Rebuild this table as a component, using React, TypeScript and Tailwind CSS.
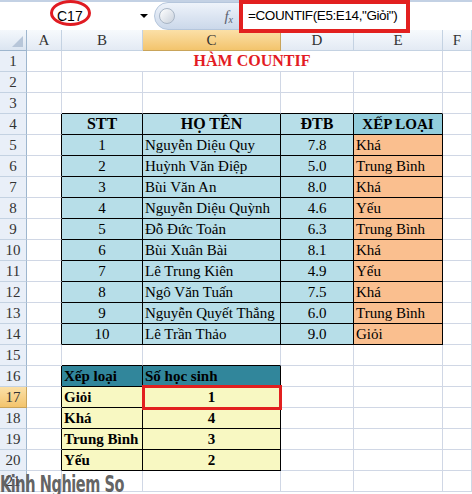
import React from 'react';

// ===========================================
// DATA
// ===========================================

const students = [
  { stt: 1, name: 'Nguyễn Diệu Quy', dtb: '7.8', rank: 'Khá' },
  { stt: 2, name: 'Huỳnh Văn Điệp', dtb: '5.0', rank: 'Trung Bình' },
  { stt: 3, name: 'Bùi Văn An', dtb: '8.0', rank: 'Khá' },
  { stt: 4, name: 'Nguyễn Diệu Quỳnh', dtb: '4.6', rank: 'Yếu' },
  { stt: 5, name: 'Đỗ Đức Toản', dtb: '6.3', rank: 'Trung Bình' },
  { stt: 6, name: 'Bùi Xuân Bài', dtb: '8.1', rank: 'Khá' },
  { stt: 7, name: 'Lê Trung Kiên', dtb: '4.9', rank: 'Yếu' },
  { stt: 8, name: 'Ngô Văn Tuấn', dtb: '7.5', rank: 'Khá' },
  { stt: 9, name: 'Nguyễn Quyết Thắng', dtb: '6.0', rank: 'Trung Bình' },
  { stt: 10, name: 'Lê Trần Thảo', dtb: '9.0', rank: 'Giỏi' },
];

const summary = [
  { label: 'Giỏi', count: 1 },
  { label: 'Khá', count: 4 },
  { label: 'Trung Bình', count: 3 },
  { label: 'Yếu', count: 2 },
];

type CellInfo = {
  text?: string;
  bg?: string;
  align?: 'left' | 'center';
  bold?: boolean;
  big?: boolean;
  selected?: boolean;
};

const inTable1 = (r: number, c: number) => r >= 4 && r <= 14 && c >= 1 && c <= 4;
const inTable2 = (r: number, c: number) => r >= 16 && r <= 20 && c >= 1 && c <= 2;
const inTable = (r: number, c: number) => inTable1(r, c) || inTable2(r, c);

function getCell(r: number, c: number): CellInfo {
  if (r === 4 && c >= 1 && c <= 4) {
    const heads = ['', 'STT', 'HỌ TÊN', 'ĐTB', 'XẾP LOẠI'];
    return {
      text: heads[c],
      bg: c === 4 ? 'bg-[#92cddc]' : 'bg-[#b7dee8]',
      align: 'center',
      bold: true,
      big: c !== 4,
    };
  }
  if (r >= 5 && r <= 14) {
    const s = students[r - 5];
    if (c === 1) return { text: String(s.stt), bg: 'bg-[#b7dee8]', align: 'center' };
    if (c === 2) return { text: s.name, bg: 'bg-[#b7dee8]', align: 'left' };
    if (c === 3) return { text: s.dtb, bg: 'bg-[#b7dee8]', align: 'center' };
    if (c === 4) return { text: s.rank, bg: 'bg-[#fabf8f]', align: 'left' };
  }
  if (r === 16) {
    if (c === 1) return { text: 'Xếp loại', bg: 'bg-[#31869b]', align: 'left', bold: true };
    if (c === 2) return { text: 'Số học sinh', bg: 'bg-[#31869b]', align: 'left', bold: true };
  }
  if (r >= 17 && r <= 20) {
    const s = summary[r - 17];
    if (c === 1) return { text: s.label, bg: 'bg-[#f8f8c2]', align: 'left', bold: true };
    if (c === 2)
      return { text: String(s.count), bg: 'bg-[#f8f8c2]', align: 'center', bold: true, selected: r === 17 };
  }
  return {};
}

// ===========================================
// FORMULA BAR
// ===========================================

function FormulaBar() {
  return (
    <div className="relative z-20 flex h-[30px] border-t-2 border-[#c3d1e4] bg-white">
      {/* Name box */}
      <div className="flex w-[154px] items-center bg-white pl-[57px] pr-[6px]">
        <span className="relative text-[14px] text-black">
          C17
          <span className="absolute -left-[7px] -top-[6px] h-[26px] w-[41px] rounded-[50%] border-[3px] border-[#e01b22]" />
        </span>
        <span className="ml-auto h-0 w-0 border-x-[4px] border-t-[4px] border-x-transparent border-t-black" />
      </div>
      {/* Splitter + fx */}
      <div className="flex w-[86px] items-center justify-between rounded-l-full border border-[#b5c6dc] bg-gradient-to-b from-[#eef3fa] to-[#cbd8ea] pl-[4px] pr-[6px]">
        <span className="h-[16px] w-[16px] rounded-full border border-[#a9b6c6] bg-gradient-to-br from-white to-[#c9d1dc]" />
        <span className="font-['Liberation_Serif',serif] text-[15px] italic text-[#5b6270]">
          f<sub className="text-[10px]">x</sub>
        </span>
      </div>
      {/* Formula */}
      <div className="flex flex-1 items-center bg-white">
        <span className="pl-[8px] text-[13.5px] tracking-[-0.4px] text-black">=COUNTIF(E5:E14,"Giỏi")</span>
      </div>
      <span className="absolute left-[239px] top-[-2px] h-[33px] w-[171px] border-4 border-[#e2201f]" />
    </div>
  );
}

// ===========================================
// SHEET
// ===========================================

export default function App() {
  const cols = ['A', 'B', 'C', 'D', 'E', 'F'];
  const rows = Array.from({ length: 21 }, (_, i) => i + 1);

  return (
    <div className="relative h-[494px] w-[472px] overflow-hidden bg-white font-['Liberation_Sans',sans-serif]">
      <FormulaBar />

      <div className="grid grid-cols-[27px_35px_81px_138px_73px_89px_29px] auto-rows-[21px] font-['Liberation_Serif',serif] text-[15px] text-black">
        {/* Column header row */}
        <div className="flex items-end justify-end border-b border-r border-[#9eb6ce] bg-gradient-to-b from-[#f4f8fc] to-[#dbe5f1] p-[3px]">
          <span className="h-0 w-0 border-b-[11px] border-l-[11px] border-b-[#b7c6d9] border-l-transparent" />
        </div>
        {cols.map((c) => (
          <div
            key={c}
            className={`flex items-center justify-center border-b border-r text-[15px] text-[#333] ${
              c === 'C'
                ? 'border-[#c9a45a] bg-gradient-to-b from-[#fbe0a7] to-[#f3c46c]'
                : 'border-[#c4d2e2] bg-gradient-to-b from-[#f7fafd] to-[#e3eaf4]'
            }`}
          >
            {c}
          </div>
        ))}

        {rows.map((r) => (
          <React.Fragment key={r}>
            <div
              className={`flex items-center justify-center border-b border-r text-[15px] leading-none text-[#333] ${
                r === 17
                  ? 'border-[#c9a45a] bg-gradient-to-b from-[#fbe0a7] to-[#f3c46c]'
                  : 'border-[#c4d2e2] border-r-[#9eb6ce] bg-[#e9eff8]'
              }`}
            >
              {r}
            </div>
            {r === 1 ? (
              <>
                <div className="border-b border-r border-[#d0d7e5]" />
                <div className="col-span-4 flex items-center justify-center border-b border-r border-[#d0d7e5] text-[16px] font-bold text-[#e31b23]">
                  HÀM COUNTIF
                </div>
                <div className="border-b border-r border-[#d0d7e5]" />
              </>
            ) : (
              cols.map((_, c) => {
                const info = getCell(r, c);
                const cellIn = inTable(r, c);
                const rightBlack = cellIn || inTable(r, c + 1);
                const bottomBlack = cellIn || inTable(r + 1, c);
                return (
                  <div
                    key={c}
                    className={`relative flex items-center whitespace-nowrap border-b border-r leading-none ${
                      rightBlack ? 'border-r-black' : 'border-r-[#d0d7e5]'
                    } ${bottomBlack ? 'border-b-black' : 'border-b-[#d0d7e5]'} ${info.bg ?? ''} ${
                      info.align === 'center' ? 'justify-center' : 'justify-start pl-[2px]'
                    } ${info.bold ? 'font-bold' : ''} ${info.big ? 'text-[16px]' : ''}`}
                  >
                    {info.text}
                    {info.selected && (
                      <span className="absolute -left-px -top-[2px] z-10 h-[25px] w-[140px] border-[3px] border-[#e2201f]" />
                    )}
                  </div>
                );
              })
            )}
          </React.Fragment>
        ))}
      </div>

      {/* Watermark */}
      <div className="absolute left-0 top-[473px] z-30 origin-left scale-x-[0.7] font-['DejaVu_Sans_Condensed','DejaVu_Sans',sans-serif] text-[23px] font-bold leading-none tracking-[-0.6px] text-[#505050]/90">
        Kinh Nghiem So
      </div>
    </div>
  );
}
